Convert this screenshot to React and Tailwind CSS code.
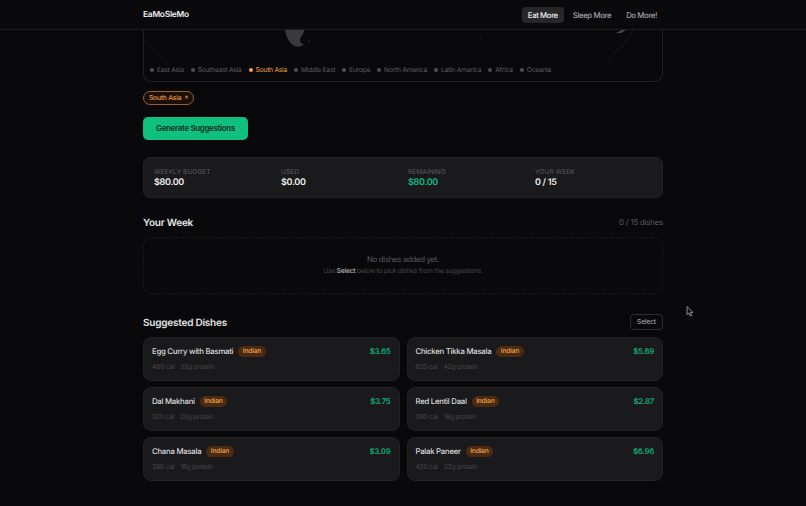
const regions = [
  { name: 'East Asia' },
  { name: 'Southeast Asia' },
  { name: 'South Asia', active: true },
  { name: 'Middle East' },
  { name: 'Europe' },
  { name: 'North America' },
  { name: 'Latin America' },
  { name: 'Africa' },
  { name: 'Oceania' },
]

const dishes = [
  { name: 'Egg Curry with Basmati', price: '$3.65', cal: '480 cal', protein: '28g protein' },
  { name: 'Chicken Tikka Masala', price: '$5.69', cal: '620 cal', protein: '42g protein' },
  { name: 'Dal Makhani', price: '$3.75', cal: '520 cal', protein: '20g protein' },
  { name: 'Red Lentil Daal', price: '$2.87', cal: '360 cal', protein: '18g protein' },
  { name: 'Chana Masala', price: '$3.09', cal: '380 cal', protein: '16g protein' },
  { name: 'Palak Paneer', price: '$6.96', cal: '420 cal', protein: '22g protein' },
]

const stats = [
  { label: 'WEEKLY BUDGET', value: '$80.00', color: 'text-[#ededed]' },
  { label: 'USED', value: '$0.00', color: 'text-[#ededed]' },
  { label: 'REMAINING', value: '$80.00', color: 'text-[#10b981]' },
  { label: 'YOUR WEEK', value: '0 / 15', color: 'text-[#ededed]' },
]

function Globe () {
  return (
    <svg className="absolute left-0 top-0 h-[52px] w-[518px]" viewBox="0 0 518 52" fill="none">
      <path d="M141 0 C142 7 145 12 149 15 C153 18 157 17 160 14 C156 14 155 10 157 7 C159 4 160 2 160 0 Z" fill="#3a3a3d" />
      <path d="M0 9 L24 35" stroke="#141416" strokeWidth="1" />
      <path d="M489 0 C484 10 476 18 464 30" stroke="#19191b" strokeWidth="1" />
      <path d="M472 3 L478 0 L482 0 L477 3 Z" fill="#4a4a4c" />
      <circle cx="165" cy="11" r="1" fill="#222224" />
      <circle cx="337" cy="8" r="0.8" fill="#2a2a2c" />
    </svg>
  )
}

function Dish ({ dish }) {
  return (
    <div className="flex h-[44px] flex-col justify-between rounded-[8px] border border-[#222225] bg-[#1a1a1c] px-[8px] pb-[8px] pt-[8px]">
      <div className="flex items-center justify-between">
        <div className="flex items-center gap-[5px]">
          <span className="text-[7.8px] leading-[11px] font-medium tracking-[-0.27px] text-[#dcdcdc]">{dish.name}</span>
          <span className="rounded-full bg-[#4a2a12] px-[4.5px] py-[2px] text-[6.7px] leading-[7px] font-medium tracking-[-0.2px] text-[#f0a54a]">Indian</span>
        </div>
        <span className="text-[7.8px] leading-[11px] font-semibold tracking-[-0.25px] text-[#10a877]">{dish.price}</span>
      </div>
      <div className="flex gap-[6px] text-[6.7px] leading-[9px] tracking-[-0.22px] text-[#47474a]">
        <span>{dish.cal}</span>
        <span>{dish.protein}</span>
      </div>
    </div>
  )
}

export default function App () {
  return (
    <div className="relative h-[506px] w-[806px] overflow-hidden bg-[#09090b] font-['Inter',sans-serif] antialiased [text-rendering:geometricPrecision]">
      <header className="flex h-[30px] items-center justify-between border-b border-[#1f1f22] bg-[#0a0a0c] px-[143px] pt-[1px]">
        <span className="pt-[1px] text-[8.4px] font-semibold tracking-[-0.25px] text-[#ededed]">EaMoSleMo</span>
        <nav className="flex items-center gap-[3px] text-[7.8px] font-medium tracking-[-0.4px]">
          <a className="rounded-[4px] bg-[#27272a] px-[6px] py-[2.5px] leading-[11px] text-[#ededed]">Eat More</a>
          <a className="px-[6px] py-[2.5px] leading-[11px] text-[#a1a1a6]">Sleep More</a>
          <a className="px-[6px] py-[2.5px] leading-[11px] text-[#a1a1a6]">Do More!</a>
        </nav>
      </header>

      <main className="ml-[143px] w-[520px]">
        <section className="relative h-[52px] rounded-b-[8px] border border-t-0 border-[#222225]">
          <Globe />
          <div className="absolute bottom-[6.5px] left-[6px] flex items-center gap-[7px] text-[6.7px] leading-[10px] tracking-[-0.24px]">
            {regions.map((r) => (
              <span key={r.name} className={r.active ? 'flex items-center gap-[3px] text-[#f0a050]' : 'flex items-center gap-[3px] text-[#5c5c60]'}>
                <span className={r.active ? 'h-[4px] w-[4px] rounded-full bg-[#f0a050]' : 'h-[4px] w-[4px] rounded-full bg-[#4f4f52]'} />
                {r.name}
              </span>
            ))}
          </div>
        </section>

        <div className="mt-[9px] flex">
          <span className="flex h-[14px] items-center gap-[3px] rounded-full border border-[#9a5f35] bg-[#1a1008] px-[5px] text-[6.7px] font-medium tracking-[-0.2px] text-[#e89a50]">
            South Asia <span className="text-[6.5px]">×</span>
          </span>
        </div>

        <button className="mt-[12px] block h-[23px] w-[105px] rounded-[5px] bg-[#10c07f] text-[7.8px] font-semibold tracking-[-0.24px] text-[#0a2a1e]">
          Generate Suggestions
        </button>

        <section className="mt-[17px] grid h-[41px] grid-cols-4 items-center rounded-[7px] border border-[#222225] bg-[#1a1a1c] pl-[10px]">
          {stats.map((s) => (
            <div key={s.label} className="flex flex-col">
              <span className="text-[6.7px] leading-[10px] text-[#5c5c60]">{s.label}</span>
              <span className={`text-[9px] leading-[12px] font-semibold tracking-[-0.3px] ${s.color}`}>{s.value}</span>
            </div>
          ))}
        </section>

        <div className="mt-[18px] flex items-center justify-between">
          <h2 className="text-[10px] leading-[14px] font-semibold tracking-[-0.22px] text-[#e5e5e5]">Your Week</h2>
          <span className="text-[7.8px] tracking-[-0.18px] text-[#5c5c60]">0 / 15 dishes</span>
        </div>

        <section className="mt-[7px] flex h-[57px] flex-col items-center justify-center rounded-[8px] border border-dashed border-[#1a1a1d] pb-[2px]">
          <p className="text-[7.8px] leading-[12px] tracking-[-0.3px] text-[#5c5c60]">No dishes added yet.</p>
          <p className="mt-[1px] text-[6.7px] leading-[10px] tracking-[-0.23px] text-[#47474a]">
            Use <strong className="font-semibold text-[#a1a1a6]">Select</strong> below to pick dishes from the suggestions.
          </p>
        </section>

        <div className="mt-[20px] flex h-[16px] items-center justify-between">
          <h2 className="pt-[1px] text-[10px] leading-[14px] font-semibold tracking-[-0.22px] text-[#e5e5e5]">Suggested Dishes</h2>
          <button className="h-[16px] w-[33px] rounded-[4px] border border-[#2e2e31] text-[6.7px] font-medium tracking-[-0.2px] text-[#a1a1a6]">Select</button>
        </div>

        <section className="mt-[7px] grid grid-cols-2 gap-x-[7px] gap-y-[6px]">
          {dishes.map((d) => <Dish key={d.name} dish={d} />)}
        </section>
      </main>

      <svg className="absolute left-[686px] top-[306px] h-[11px] w-[8px]" viewBox="0 0 8 11" fill="#111">
        <path d="M1 0.5 V8.5 L3 7 L4.4 10 L5.8 9.4 L4.5 6.6 L7 6.4 Z" stroke="#bbb" strokeWidth="0.7" />
      </svg>
    </div>
  )
}
